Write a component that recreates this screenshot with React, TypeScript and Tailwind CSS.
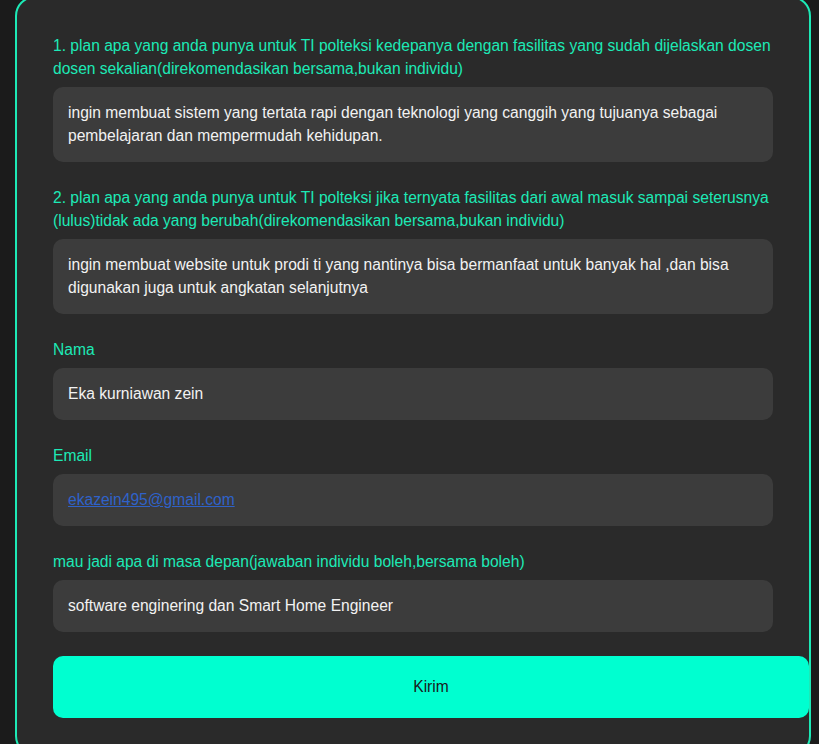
import React from "react";

const fields = [
  {
    label:
      "1. plan apa yang anda punya untuk TI polteksi kedepanya dengan fasilitas yang sudah dijelaskan dosen dosen sekalian(direkomendasikan bersama,bukan individu)",
    value:
      "ingin membuat sistem yang tertata rapi dengan teknologi yang canggih yang tujuanya sebagai pembelajaran dan mempermudah kehidupan.",
  },
  {
    label:
      "2. plan apa yang anda punya untuk TI polteksi jika ternyata fasilitas dari awal masuk sampai seterusnya (lulus)tidak ada yang berubah(direkomendasikan bersama,bukan individu)",
    value:
      "ingin membuat website untuk prodi ti yang nantinya bisa bermanfaat untuk banyak hal ,dan bisa digunakan juga untuk angkatan selanjutnya",
  },
  { label: "Nama", value: "Eka kurniawan zein" },
  { label: "Email", value: "ekazein495@gmail.com", link: true },
  {
    label: "mau jadi apa di masa depan(jawaban individu boleh,bersama boleh)",
    value: "software enginering dan Smart Home Engineer",
  },
];

export default function App() {
  return (
    <div className="h-[744px] overflow-hidden bg-[#1b1b1b] font-['Liberation_Sans',Arial,sans-serif] text-[15.6px] leading-[23px]">
      <div className="ml-[15px] mt-[-4.5px] w-[796px] min-h-[760px] rounded-[20px] border-2 border-[#1de9b6] bg-[#2a2a2a] px-[36px] pt-[36px]">
        {fields.map((f, i) => (
          <div key={i} className="mb-[24px]">
            <div className="mb-[7px] text-[#1de9b6]">{f.label}</div>
            <div className="rounded-[10px] bg-[#3c3c3c] px-[15px] py-[14.5px] text-[#f2f2f2]">
              {f.link ? (
                <span className="text-[#2f62c9] underline">{f.value}</span>
              ) : (
                f.value
              )}
            </div>
          </div>
        ))}
        <button className="h-[62px] w-[calc(100%+36px)] rounded-[10px] bg-[#00ffd0] text-[#1a1a1a]">
          Kirim
        </button>
      </div>
    </div>
  );
}
